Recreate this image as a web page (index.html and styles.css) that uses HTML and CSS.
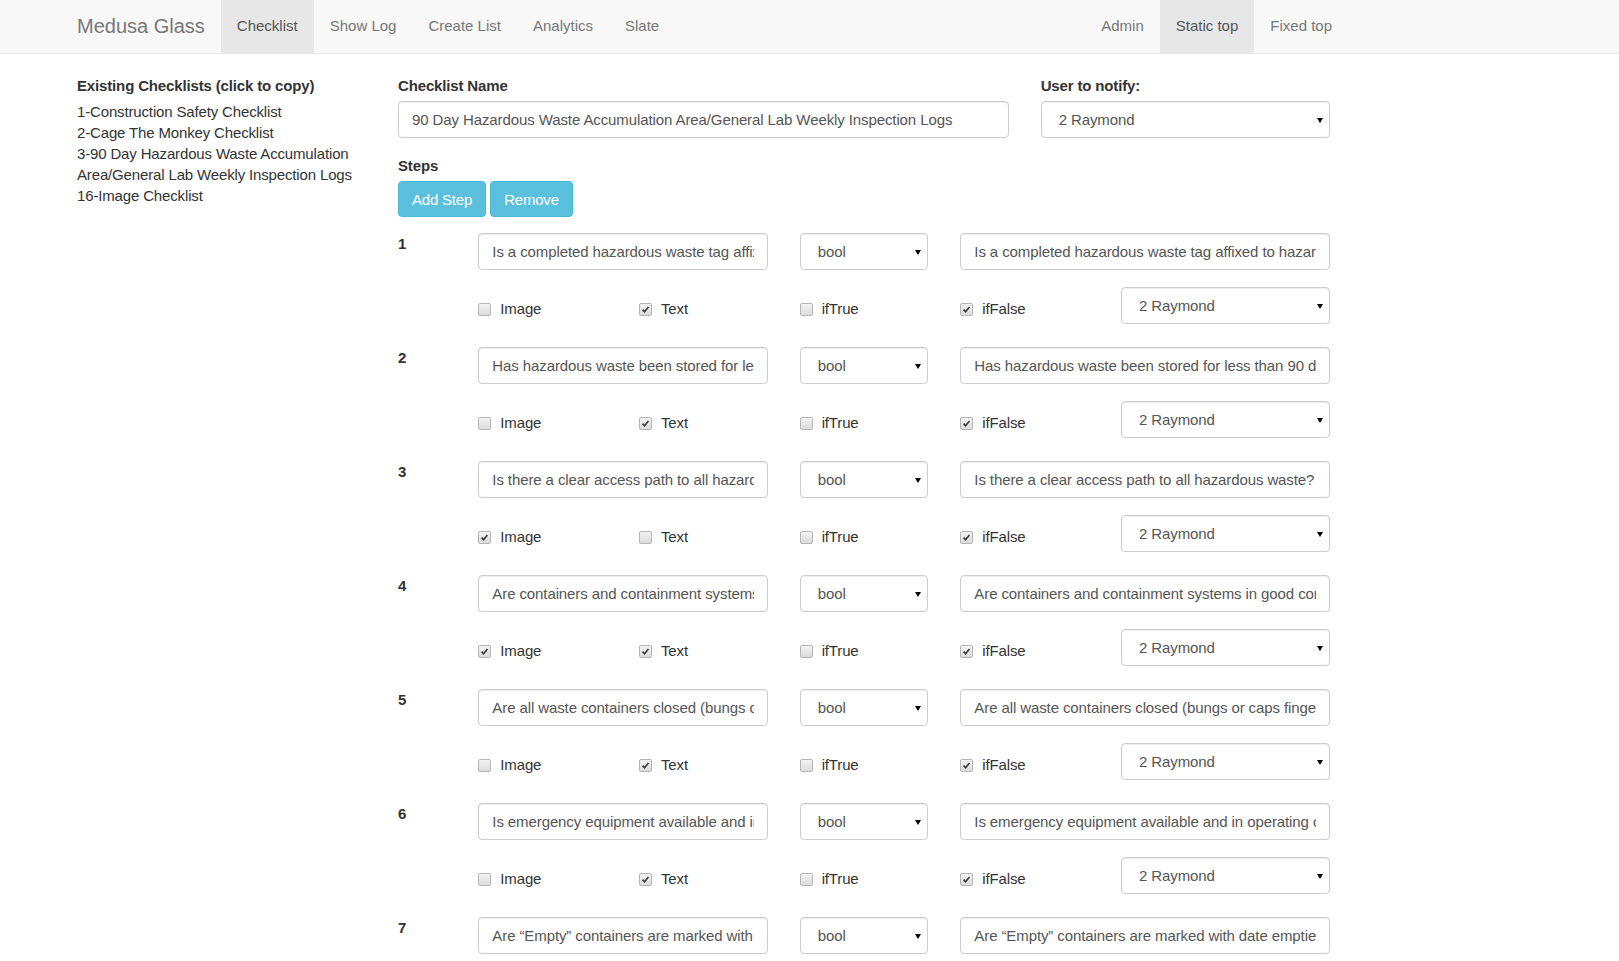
FILE: index.html
```html
<!DOCTYPE html>
<html lang="en">
<head>
<meta charset="utf-8">
<title>Medusa Glass - Checklist</title>
<link rel="stylesheet" href="styles.css">
</head>
<body>
<nav class="navbar">
  <div class="navbar-inner">
    <a class="brand" href="#">Medusa Glass</a>
    <ul class="nav">
      <li class="active"><a href="#">Checklist</a></li>
      <li><a href="#">Show Log</a></li>
      <li><a href="#">Create List</a></li>
      <li><a href="#">Analytics</a></li>
      <li><a href="#">Slate</a></li>
    </ul>
    <ul class="nav nav-right">
      <li><a href="#">Admin</a></li>
      <li class="active"><a href="#">Static top</a></li>
      <li><a href="#">Fixed top</a></li>
    </ul>
  </div>
</nav>

<div class="page">
  <aside class="sidebar">
    <div class="lbl">Existing Checklists (click to copy)</div>
    <div class="item">1-Construction Safety Checklist</div>
    <div class="item">2-Cage The Monkey Checklist</div>
    <div class="item">3-90 Day Hazardous Waste Accumulation Area/General Lab Weekly Inspection Logs</div>
    <div class="item">16-Image Checklist</div>
  </aside>

  <main class="main">
    <div class="top-row">
      <div class="name-col">
        <label class="lbl">Checklist Name</label>
        <input class="fc" type="text" value="90 Day Hazardous Waste Accumulation Area/General Lab Weekly Inspection Logs">
      </div>
      <div class="notify-col">
        <label class="lbl">User to notify:</label>
        <div class="sel"><select class="fc"><option>2 Raymond</option></select></div>
      </div>
    </div>

    <label class="lbl">Steps</label>
    <div class="btns">
      <button class="btn">Add Step</button>
      <button class="btn">Remove</button>
    </div>

    <div class="steps">
      <div class="step">
        <div class="num">1</div>
        <input class="fc q" type="text" value="Is a completed hazardous waste tag affixed to hazardous waste containers?">
        <div class="sel type"><select class="fc"><option>bool</option></select></div>
        <input class="fc q2" type="text" value="Is a completed hazardous waste tag affixed to hazardous waste containers?">
        <label class="chk c-img"><span class="box"></span>Image</label>
        <label class="chk c-txt"><span class="box on"><svg viewBox="0 0 13 13"><path d="M3 6.6 L5.4 9.2 L10 3.6"/></svg></span>Text</label>
        <label class="chk c-true"><span class="box"></span>ifTrue</label>
        <label class="chk c-false"><span class="box on"><svg viewBox="0 0 13 13"><path d="M3 6.6 L5.4 9.2 L10 3.6"/></svg></span>ifFalse</label>
        <div class="sel who"><select class="fc"><option>2 Raymond</option></select></div>
      </div>

      <div class="step">
        <div class="num">2</div>
        <input class="fc q" type="text" value="Has hazardous waste been stored for less than 90 days?">
        <div class="sel type"><select class="fc"><option>bool</option></select></div>
        <input class="fc q2" type="text" value="Has hazardous waste been stored for less than 90 days?">
        <label class="chk c-img"><span class="box"></span>Image</label>
        <label class="chk c-txt"><span class="box on"><svg viewBox="0 0 13 13"><path d="M3 6.6 L5.4 9.2 L10 3.6"/></svg></span>Text</label>
        <label class="chk c-true"><span class="box"></span>ifTrue</label>
        <label class="chk c-false"><span class="box on"><svg viewBox="0 0 13 13"><path d="M3 6.6 L5.4 9.2 L10 3.6"/></svg></span>ifFalse</label>
        <div class="sel who"><select class="fc"><option>2 Raymond</option></select></div>
      </div>

      <div class="step">
        <div class="num">3</div>
        <input class="fc q" type="text" value="Is there a clear access path to all hazardous waste?">
        <div class="sel type"><select class="fc"><option>bool</option></select></div>
        <input class="fc q2" type="text" value="Is there a clear access path to all hazardous waste?">
        <label class="chk c-img"><span class="box on"><svg viewBox="0 0 13 13"><path d="M3 6.6 L5.4 9.2 L10 3.6"/></svg></span>Image</label>
        <label class="chk c-txt"><span class="box"></span>Text</label>
        <label class="chk c-true"><span class="box"></span>ifTrue</label>
        <label class="chk c-false"><span class="box on"><svg viewBox="0 0 13 13"><path d="M3 6.6 L5.4 9.2 L10 3.6"/></svg></span>ifFalse</label>
        <div class="sel who"><select class="fc"><option>2 Raymond</option></select></div>
      </div>

      <div class="step">
        <div class="num">4</div>
        <input class="fc q" type="text" value="Are containers and containment systems in good condition?">
        <div class="sel type"><select class="fc"><option>bool</option></select></div>
        <input class="fc q2" type="text" value="Are containers and containment systems in good condition?">
        <label class="chk c-img"><span class="box on"><svg viewBox="0 0 13 13"><path d="M3 6.6 L5.4 9.2 L10 3.6"/></svg></span>Image</label>
        <label class="chk c-txt"><span class="box on"><svg viewBox="0 0 13 13"><path d="M3 6.6 L5.4 9.2 L10 3.6"/></svg></span>Text</label>
        <label class="chk c-true"><span class="box"></span>ifTrue</label>
        <label class="chk c-false"><span class="box on"><svg viewBox="0 0 13 13"><path d="M3 6.6 L5.4 9.2 L10 3.6"/></svg></span>ifFalse</label>
        <div class="sel who"><select class="fc"><option>2 Raymond</option></select></div>
      </div>

      <div class="step">
        <div class="num">5</div>
        <input class="fc q" type="text" value="Are all waste containers closed (bungs or caps finger tight)?">
        <div class="sel type"><select class="fc"><option>bool</option></select></div>
        <input class="fc q2" type="text" value="Are all waste containers closed (bungs or caps finger tight)?">
        <label class="chk c-img"><span class="box"></span>Image</label>
        <label class="chk c-txt"><span class="box on"><svg viewBox="0 0 13 13"><path d="M3 6.6 L5.4 9.2 L10 3.6"/></svg></span>Text</label>
        <label class="chk c-true"><span class="box"></span>ifTrue</label>
        <label class="chk c-false"><span class="box on"><svg viewBox="0 0 13 13"><path d="M3 6.6 L5.4 9.2 L10 3.6"/></svg></span>ifFalse</label>
        <div class="sel who"><select class="fc"><option>2 Raymond</option></select></div>
      </div>

      <div class="step">
        <div class="num">6</div>
        <input class="fc q" type="text" value="Is emergency equipment available and in operating condition?">
        <div class="sel type"><select class="fc"><option>bool</option></select></div>
        <input class="fc q2" type="text" value="Is emergency equipment available and in operating condition?">
        <label class="chk c-img"><span class="box"></span>Image</label>
        <label class="chk c-txt"><span class="box on"><svg viewBox="0 0 13 13"><path d="M3 6.6 L5.4 9.2 L10 3.6"/></svg></span>Text</label>
        <label class="chk c-true"><span class="box"></span>ifTrue</label>
        <label class="chk c-false"><span class="box on"><svg viewBox="0 0 13 13"><path d="M3 6.6 L5.4 9.2 L10 3.6"/></svg></span>ifFalse</label>
        <div class="sel who"><select class="fc"><option>2 Raymond</option></select></div>
      </div>

      <div class="step step-last">
        <div class="num">7</div>
        <input class="fc q" type="text" value="Are “Empty” containers are marked with date emptied?">
        <div class="sel type"><select class="fc"><option>bool</option></select></div>
        <input class="fc q2" type="text" value="Are “Empty” containers are marked with date emptied?">
      </div>
    </div>
  </main>
</div>
</body>
</html>
```

FILE: styles.css
```css
* { box-sizing: border-box; }

html, body { margin: 0; }

body {
  font-family: "Liberation Sans", Arial, Helvetica, sans-serif;
  font-size: 15px;
  line-height: 21px;
  color: #333;
  background: #fff;
}

/* ---------- navbar ---------- */
.navbar {
  height: 54px;
  background: #f8f8f8;
  border-bottom: 1px solid #e7e7e7;
  margin-bottom: 21px;
}

.navbar-inner {
  display: flex;
  height: 53px;
  margin-left: 77px;
  width: 1271px;
}

.brand {
  font-size: 20px;
  line-height: 52px;
  color: #777;
  text-decoration: none;
  margin-right: 16px;
}

.nav {
  display: flex;
  list-style: none;
  margin: 0;
  padding: 0;
}

.nav a {
  display: block;
  padding: 0 16px;
  line-height: 51px;
  height: 53px;
  color: #777;
  text-decoration: none;
}

.nav .active a {
  background: #e7e7e7;
  color: #555;
}

.nav-right { margin-left: auto; }

/* ---------- page ---------- */
.page {
  display: grid;
  grid-template-columns: 289px 932px;
  column-gap: 32px;
  padding-left: 77px;
  letter-spacing: -0.15px;
}

.lbl {
  display: block;
  font-weight: bold;
  margin-bottom: 5px;
}

.item { color: #333; }

/* ---------- form controls ---------- */
.fc {
  display: block;
  width: 100%;
  height: 37px;
  padding: 0 13px;
  border: 1px solid #ccc;
  border-radius: 4px;
  background: #fff;
  font-family: inherit;
  font-size: 15px;
  letter-spacing: -0.1px;
  color: #555;
  box-shadow: inset 0 1px 1px rgba(0, 0, 0, 0.075);
  outline: none;
}

.sel { position: relative; }

.sel select {
  -webkit-appearance: none;
  appearance: none;
  padding-left: 17px;
}

.sel::after {
  content: "";
  position: absolute;
  right: 7px;
  top: 50%;
  margin-top: -2px;
  border-left: 3px solid transparent;
  border-right: 3px solid transparent;
  border-top: 5px solid #000;
  pointer-events: none;
}

.top-row {
  display: grid;
  grid-template-columns: repeat(12, 1fr);
  column-gap: 32px;
  margin-bottom: 17px;
}

.name-col { grid-column: 1 / span 8; }
.notify-col { grid-column: 9 / span 4; }

.btns {
  display: flex;
  gap: 4px;
  margin-bottom: 16px;
}

.btn {
  height: 36px;
  padding: 0 13px;
  border: 1px solid #46b8da;
  border-radius: 4px;
  background: #5bc0de;
  color: #fff;
  font-family: inherit;
  font-size: 15px;
  letter-spacing: -0.2px;
}

/* ---------- steps ---------- */
.step {
  display: grid;
  grid-template-columns: repeat(12, 1fr);
  grid-template-rows: 37px 37px;
  column-gap: 32px;
  row-gap: 17px;
  margin-bottom: 23px;
}

.step-last {
  grid-template-rows: 37px;
  margin-bottom: 0;
}

.num { grid-column: 1; grid-row: 1; font-weight: bold; }
.q { grid-column: 2 / span 4; grid-row: 1; }
.type { grid-column: 6 / span 2; grid-row: 1; }
.q2 { grid-column: 8 / span 5; grid-row: 1; }

.c-img { grid-column: 2 / span 2; grid-row: 2; }
.c-txt { grid-column: 4 / span 2; grid-row: 2; }
.c-true { grid-column: 6 / span 2; grid-row: 2; }
.c-false { grid-column: 8 / span 2; grid-row: 2; }
.who { grid-column: 10 / span 3; grid-row: 2; }

.chk {
  display: flex;
  align-items: center;
  height: 21px;
  margin-top: 11px;
  color: #333;
}

.box {
  flex: none;
  width: 13px;
  height: 13px;
  margin: 2px 9px 0 0;
  border: 1px solid #b5b5b5;
  border-radius: 2px;
  background: linear-gradient(#f3f3f3, #dcdcdc);
  display: flex;
}

.box svg {
  width: 11px;
  height: 11px;
}

.box svg path {
  fill: none;
  stroke: #3a3a3a;
  stroke-width: 1.9;
}
```
